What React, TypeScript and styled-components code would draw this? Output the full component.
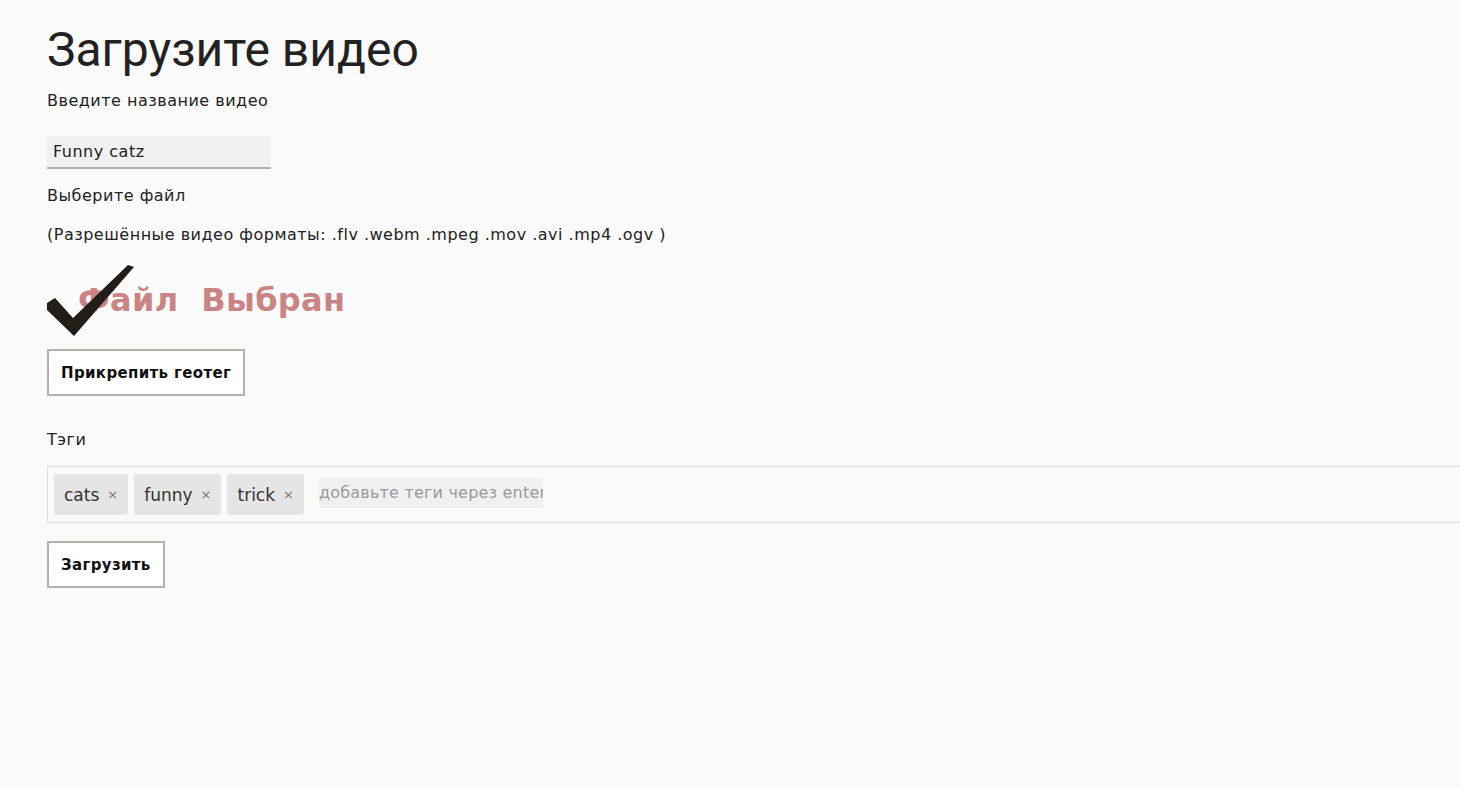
import React from "react";
import styled, { createGlobalStyle } from "styled-components";

const Global = createGlobalStyle`
  html, body { margin: 0; padding: 0; background: #fafafa; overflow: hidden; }
  body { font-family: "DejaVu Sans", Roboto, sans-serif; color: #212529; }
  * { box-sizing: border-box; }
`;

const Page = styled.div`
  padding: 20px 0 0 47px;
  display: flex;
  flex-direction: column;
  align-items: flex-start;
`;

const Title = styled.h1`
  margin: 0;
  font-family: Roboto, sans-serif;
  font-size: 48px;
  font-weight: 400;
  line-height: 60px;
  color: #222;
`;

const Label = styled.div<{ $mt?: number }>`
  margin-top: ${(p) => p.$mt ?? 0}px;
  font-size: 16px;
  letter-spacing: 0.5px;
  line-height: 24px;
  color: #222;
`;

const TextInput = styled.input`
  margin-top: 23px;
  width: 224px;
  height: 33px;
  border: none;
  border-bottom: 2px solid #bcadad;
  background: #f0f0f0;
  padding: 0 6px;
  font-family: "DejaVu Sans", sans-serif;
  font-size: 16px;
  letter-spacing: 0.5px;
  color: #222;
  outline: none;
`;

const Chosen = styled.div`
  position: relative;
  margin-top: 18px;
  height: 72px;
  width: 320px;
`;

const ChosenText = styled.span`
  position: absolute;
  left: 31px;
  top: 16px;
  font-family: "DejaVu Sans", sans-serif;
  font-weight: 700;
  font-size: 32px;
  letter-spacing: 0.3px;
  color: #c98484;
  white-space: pre;
`;

const Check = styled.svg`
  position: absolute;
  left: 0;
  top: 0;
`;

const Button = styled.button<{ $mt: number }>`
  margin-top: ${(p) => p.$mt}px;
  background: #fff;
  border: 2px solid #bcadad;
  padding: 0 12px;
  height: 47px;
  font-family: "DejaVu Sans", sans-serif;
  font-weight: 700;
  font-size: 15px;
  letter-spacing: 0.35px;
  color: #111;
  cursor: pointer;
`;

const TagsBox = styled.div`
  margin-top: 14px;
  width: calc(100% + 20px);
  height: 57px;
  border: 1px solid #ddd;
  display: flex;
  align-items: center;
  gap: 6px;
  padding: 0 6px;
`;

const Chip = styled.span`
  display: inline-flex;
  align-items: center;
  height: 41px;
  padding: 0 10px;
  background: #e5e5e5;
  border-radius: 3px;
  font-size: 17px;
  color: #333;
  gap: 8px;
`;

const Close = styled.span`
  font-size: 13px;
  color: #777;
`;

const TagInput = styled.input`
  margin-left: 9px;
  width: 224px;
  height: 30px;
  border: none;
  background: #f0f0f0;
  padding: 0;
  font-family: "DejaVu Sans", sans-serif;
  font-size: 16px;
  letter-spacing: 0.2px;
  color: #333;
  outline: none;
  margin-bottom: 4px;
  &::placeholder { color: #999; }
`;

export default function App() {
  const tags = ["cats", "funny", "trick"];
  return (
    <>
      <Global />
      <Page>
        <Title>Загрузите видео</Title>
        <Label $mt={9}>Введите название видео</Label>
        <TextInput defaultValue="Funny catz" />
        <Label $mt={15}>Выберите файл</Label>
        <Label $mt={15}>(Разрешённые видео форматы: .flv .webm .mpeg .mov .avi .mp4 .ogv )</Label>
        <Chosen>
          <ChosenText>Файл  Выбран</ChosenText>
          <Check width="90" height="72" viewBox="0 0 90 72">
            <polygon points="0,38 8,33 26,53 81,0 87,2 27,71 0,45" fill="#221d16" />
          </Check>
        </Chosen>
        <Button $mt={12}>Прикрепить геотег</Button>
        <Label $mt={32}>Тэги</Label>
        <TagsBox>
          {tags.map((t) => (
            <Chip key={t}>
              {t}
              <Close>×</Close>
            </Chip>
          ))}
          <TagInput placeholder="добавьте теги через enter" />
        </TagsBox>
        <Button $mt={18}>Загрузить</Button>
      </Page>
    </>
  );
}
